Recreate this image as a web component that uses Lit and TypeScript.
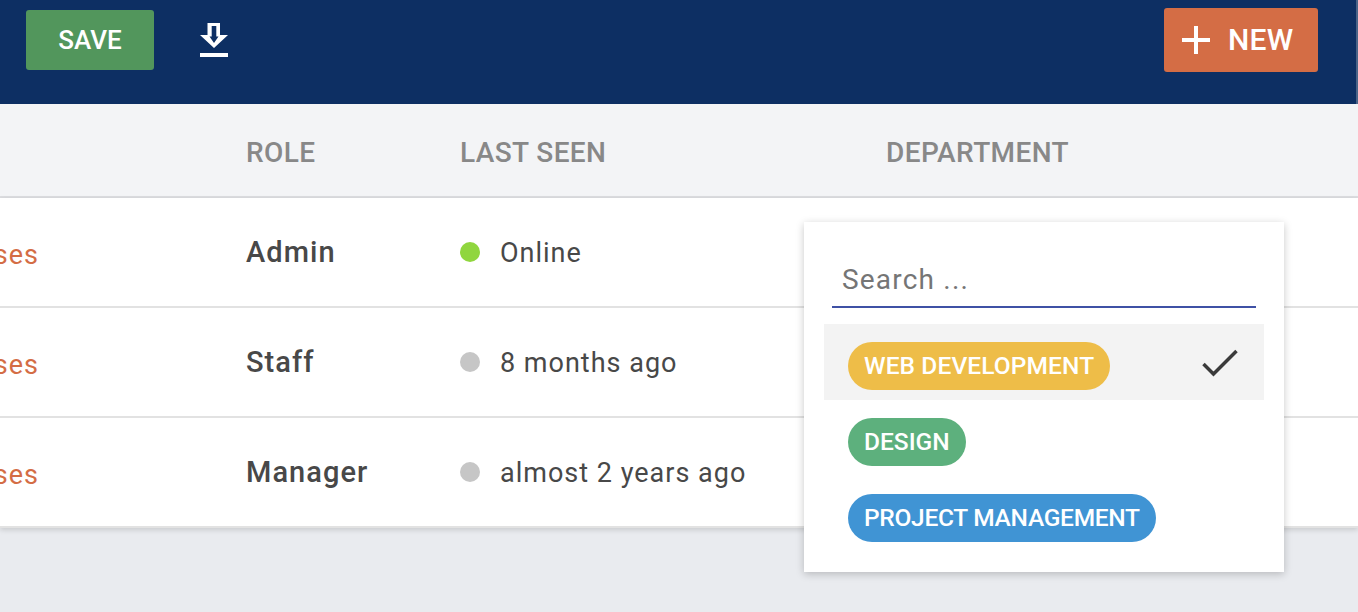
import { LitElement, html, css } from "lit";
import { customElement } from "lit/decorators.js";

const rows = [
  { role: "Admin", seen: "Online", on: true },
  { role: "Staff", seen: "8 months ago", on: false },
  { role: "Manager", seen: "almost 2 years ago", on: false },
];

@customElement("app-root")
export class AppRoot extends LitElement {
  static styles = css`
    :host {
      display: block;
      position: relative;
      width: 1358px;
      height: 612px;
      overflow: hidden;
      background: #e9ebef;
      font-family: Roboto, "Liberation Sans", sans-serif;
      color: #444;
    }
    .bar {
      height: 104px;
      background: #0d2f63;
      display: flex;
      align-items: flex-start;
      padding: 0 38px 0 26px;
      border-right: 2px solid #4a6488;
      box-sizing: border-box;
    }
    .save {
      margin-top: 10px;
      width: 128px;
      height: 60px;
      border-radius: 3px;
      background: #52965c;
      color: #fff;
      font-size: 26px;
      font-weight: 500;
      display: flex;
      align-items: center;
      justify-content: center;
    }
    .dl {
      margin: 23px 0 0 46px;
      display: block;
    }
    .new {
      margin-left: auto;
      margin-top: 8px;
      width: 154px;
      height: 64px;
      padding-bottom: 2px;
      border-radius: 3px;
      background: #d46d45;
      color: #fff;
      font-size: 30px;
      font-weight: 500;
      letter-spacing: 0.2px;
      display: flex;
      align-items: center;
      gap: 18px;
      padding-left: 18px;
      box-sizing: border-box;
    }
    .new svg {
      margin-top: 2px;
    }
    .thead,
    .row {
      display: grid;
      grid-template-columns: 246px 214px 426px 1fr;
      align-items: center;
    }
    .thead {
      height: 94px;
      padding-top: 4px;
      background: #f3f4f6;
      border-bottom: 2px solid #dcdde0;
      box-sizing: border-box;
      color: #888;
      font-size: 28px;
      font-weight: 500;
      letter-spacing: 0.4px;
    }
    .body {
      background: #fff;
      box-shadow: 0 2px 5px rgba(0, 0, 0, 0.14);
    }
    .row {
      height: 110px;
      box-sizing: border-box;
      border-bottom: 2px solid #e2e2e2;
    }
    .clip {
      width: 39px;
      display: flex;
      justify-content: flex-end;
      overflow: hidden;
      white-space: nowrap;
      color: #d46d45;
      font-size: 27px;
      letter-spacing: 1px;
      padding-top: 6px;
    }
    .role {
      font-size: 29px;
      font-weight: 500;
      letter-spacing: 1.05px;
      color: #484848;
    }
    .seen {
      display: flex;
      align-items: center;
      gap: 20px;
      font-size: 27px;
      letter-spacing: 1px;
      color: #484848;
      white-space: nowrap;
    }
    .seen span:last-child {
      padding-top: 2px;
    }
    .dot {
      width: 20px;
      height: 20px;
      border-radius: 50%;
      background: #c6c6c6;
      flex: none;
    }
    .dot.on {
      background: #90d63e;
    }
    .menu {
      position: absolute;
      left: 804px;
      top: 222px;
      width: 480px;
      height: 350px;
      box-sizing: border-box;
      background: #fff;
      box-shadow: 0 2px 8px rgba(0, 0, 0, 0.22);
      padding: 28px 20px 0;
    }
    .search {
      margin: 0 8px;
      height: 58px;
      box-sizing: border-box;
      border-bottom: 2px solid #3f51a5;
      padding: 13px 0 0 10px;
      color: #757575;
      font-size: 28px;
      letter-spacing: 1.2px;
    }
    .opts {
      margin-top: 16px;
      display: flex;
      flex-direction: column;
    }
    .opt {
      height: 76px;
      box-sizing: border-box;
      display: flex;
      align-items: flex-start;
      justify-content: space-between;
      padding: 18px 24px 0;
    }
    .opt.sel {
      background: #f3f3f3;
    }
    .check {
      margin: 7px 2px 0 0;
      display: block;
    }
    .pill {
      height: 48px;
      box-sizing: border-box;
      border-radius: 24px;
      padding: 0 16px 2px;
      display: flex;
      align-items: center;
      color: #fff;
      font-size: 24.5px;
      font-weight: 500;
      white-space: nowrap;
    }
    .web {
      background: #eebd48;
      letter-spacing: 0.1px;
    }
    .design {
      background: #5db07d;
    }
    .project {
      background: #4094d4;
      letter-spacing: -0.28px;
    }
  `;

  render() {
    return html`
      <div class="bar">
        <div class="save">SAVE</div>
        <svg class="dl" width="28" height="35" viewBox="0 0 28 35">
          <path fill="#fff" d="M7.500 0H20v12h8L14 25 0 12h7.500z" />
          <path fill="#0d2f63" d="M11.700 3h4.600v10.500h2.200L14 20l-4.500-6.500h2.200z" />
          <rect x="0" y="30" width="28" height="4" fill="#fff" />
        </svg>
        <div class="new">
          <svg width="28" height="28" viewBox="0 0 28 28">
            <path fill="#fff" d="M12 0h4v12h12v4H16v12h-4V16H0v-4h12z" />
          </svg>
          <span>NEW</span>
        </div>
      </div>
      <div class="thead">
        <span></span><span>ROLE</span><span>LAST SEEN</span><span>DEPARTMENT</span>
      </div>
      <div class="body">
        ${rows.map(
          (r) => html`<div class="row">
            <div><div class="clip">Courses</div></div>
            <div class="role">${r.role}</div>
            <div class="seen"><span class="dot ${r.on ? "on" : ""}"></span><span>${r.seen}</span></div>
            <div></div>
          </div>`
        )}
      </div>
      <div class="menu">
        <div class="search">Search ...</div>
        <div class="opts">
          <div class="opt sel">
            <span class="pill web">WEB DEVELOPMENT</span>
            <svg class="check" width="36" height="28" viewBox="0 0 36 28">
              <path d="M1.500 15 L11.500 25 L34.500 2" fill="none" stroke="#3a3a3a" stroke-width="3.500" />
            </svg>
          </div>
          <div class="opt"><span class="pill design">DESIGN</span></div>
          <div class="opt"><span class="pill project">PROJECT MANAGEMENT</span></div>
        </div>
      </div>
    `;
  }
}
